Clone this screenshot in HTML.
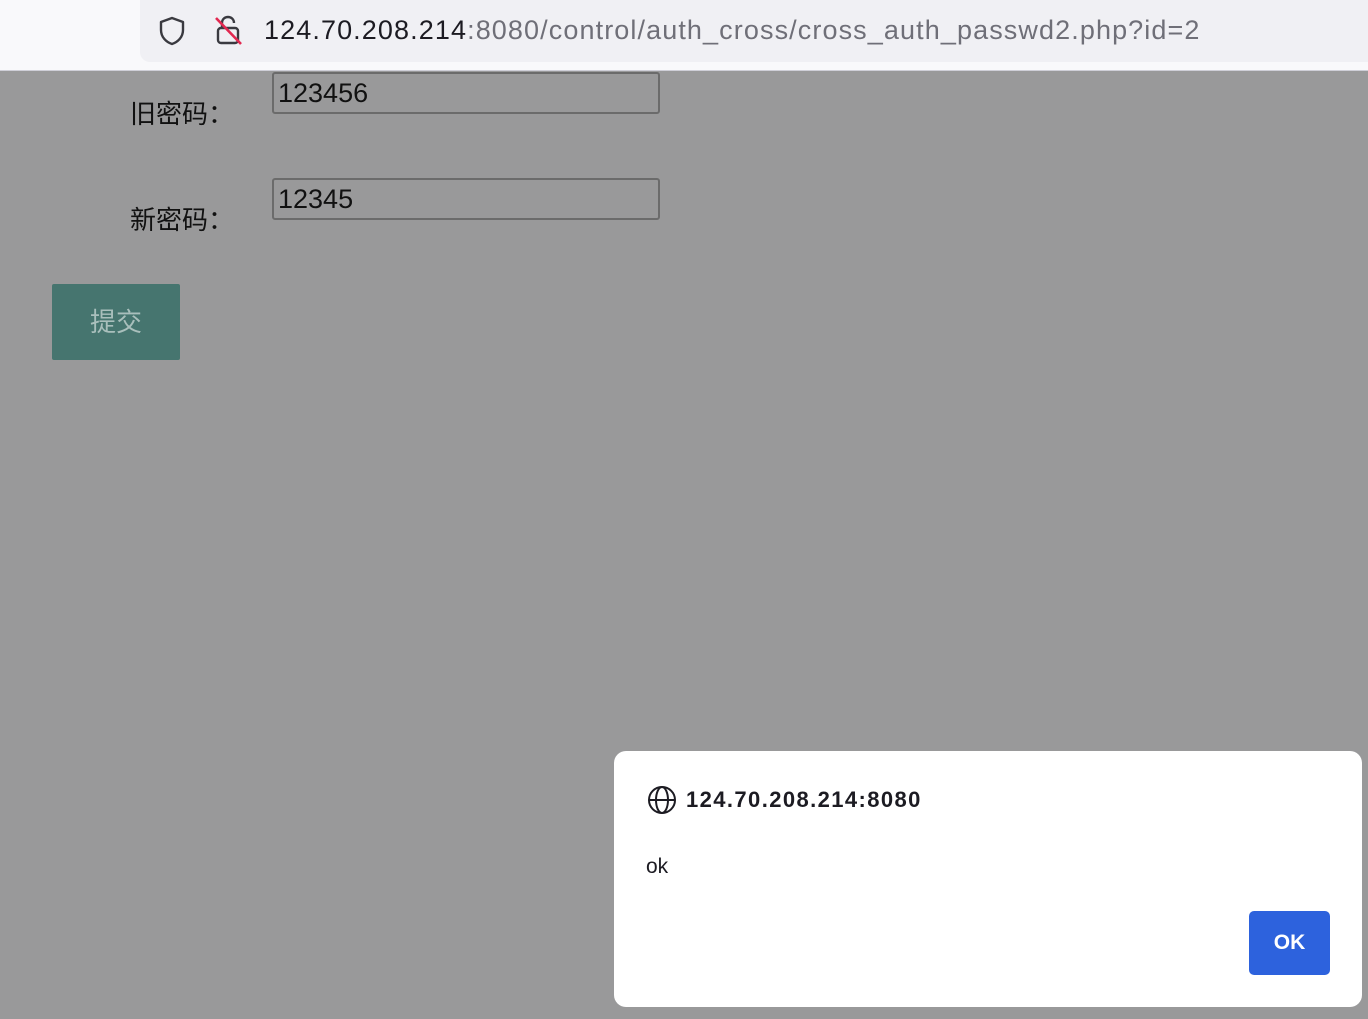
<!DOCTYPE html>
<html><head><meta charset="utf-8"><style>
*{margin:0;padding:0;box-sizing:border-box}
body{width:1368px;height:1019px;overflow:hidden;background:#99999a;font-family:"Liberation Sans","Noto Sans CJK SC",sans-serif;position:relative}
.top{position:absolute;left:0;top:0;width:1368px;height:71px;background:#f9f9fb;border-bottom:1px solid #cfcfd8}
.url{position:absolute;left:140px;top:0;width:1228px;height:62px;background:#f0f0f4;border-radius:0 0 0 10px}
.urltext{position:absolute;left:264px;top:15px;font-size:27px;color:#1c1b22;white-space:nowrap;letter-spacing:1.1px}
.urltext span{color:#6f6f78}
.lbl{position:absolute;font-size:26px;color:#111}
.inp{position:absolute;left:272px;width:388px;height:42px;border:2px solid #6b6b6b;border-radius:3px;font-size:27px;color:#111;padding-left:4px;line-height:38px}
.btn{position:absolute;left:52px;top:284px;width:128px;height:76px;background:#46756f;color:#a9bfbc;font-size:26px;text-align:center;line-height:76px;border-radius:2px}
.dlg{position:absolute;left:614px;top:751px;width:748px;height:256px;background:#fff;border-radius:12px}
.host{position:absolute;left:72px;top:36px;font-size:22px;font-weight:bold;color:#1c1b22;letter-spacing:1.4px}
.ok{position:absolute;left:32px;top:104px;font-size:21px;color:#1c1b22}
.okb{position:absolute;left:635px;top:160px;width:81px;height:64px;background:#2d62dd;border-radius:5px;color:#fff;font-weight:bold;font-size:21px;text-align:center;line-height:64px}
</style></head><body>
<div class="top"><div class="url"></div>
<svg style="position:absolute;left:156px;top:15px" width="32" height="32" viewBox="0 0 32 32"><path d="M16 3 L27 7 V15 C27 22 22 27 16 29 C10 27 5 22 5 15 V7 Z" fill="none" stroke="#3a3a40" stroke-width="2.4" stroke-linejoin="round"/></svg>
<svg style="position:absolute;left:212px;top:13px" width="32" height="34" viewBox="0 0 32 34"><path d="M10 15 V10 C10 6 13 4 16 4 C19 4 22 6 22 10" fill="none" stroke="#3a3a40" stroke-width="2.4"/><rect x="6" y="15" width="20" height="15" rx="3" fill="none" stroke="#3a3a40" stroke-width="2.4"/><path d="M4 5 L29 31" stroke="#e22850" stroke-width="2.6"/></svg>
<div class="urltext">124.70.208.214<span>:8080/control/auth_cross/cross_auth_passwd2.php?id=2</span></div>
</div>
<div class="lbl" style="left:130px;top:94px">旧密码：</div>
<div class="inp" style="top:72px">123456</div>
<div class="lbl" style="left:130px;top:200px">新密码：</div>
<div class="inp" style="top:178px">12345</div>
<div class="btn">提交</div>
<div class="dlg">
<svg style="position:absolute;left:33px;top:34px" width="30" height="30" viewBox="0 0 30 30"><g fill="none" stroke="#1c1b22" stroke-width="2"><circle cx="15" cy="15" r="13"/><ellipse cx="15" cy="15" rx="6" ry="13"/><path d="M2 15 H28"/></g></svg>
<div class="host">124.70.208.214:8080</div>
<div class="ok">ok</div>
<div class="okb">OK</div>
</div>
</body></html>
